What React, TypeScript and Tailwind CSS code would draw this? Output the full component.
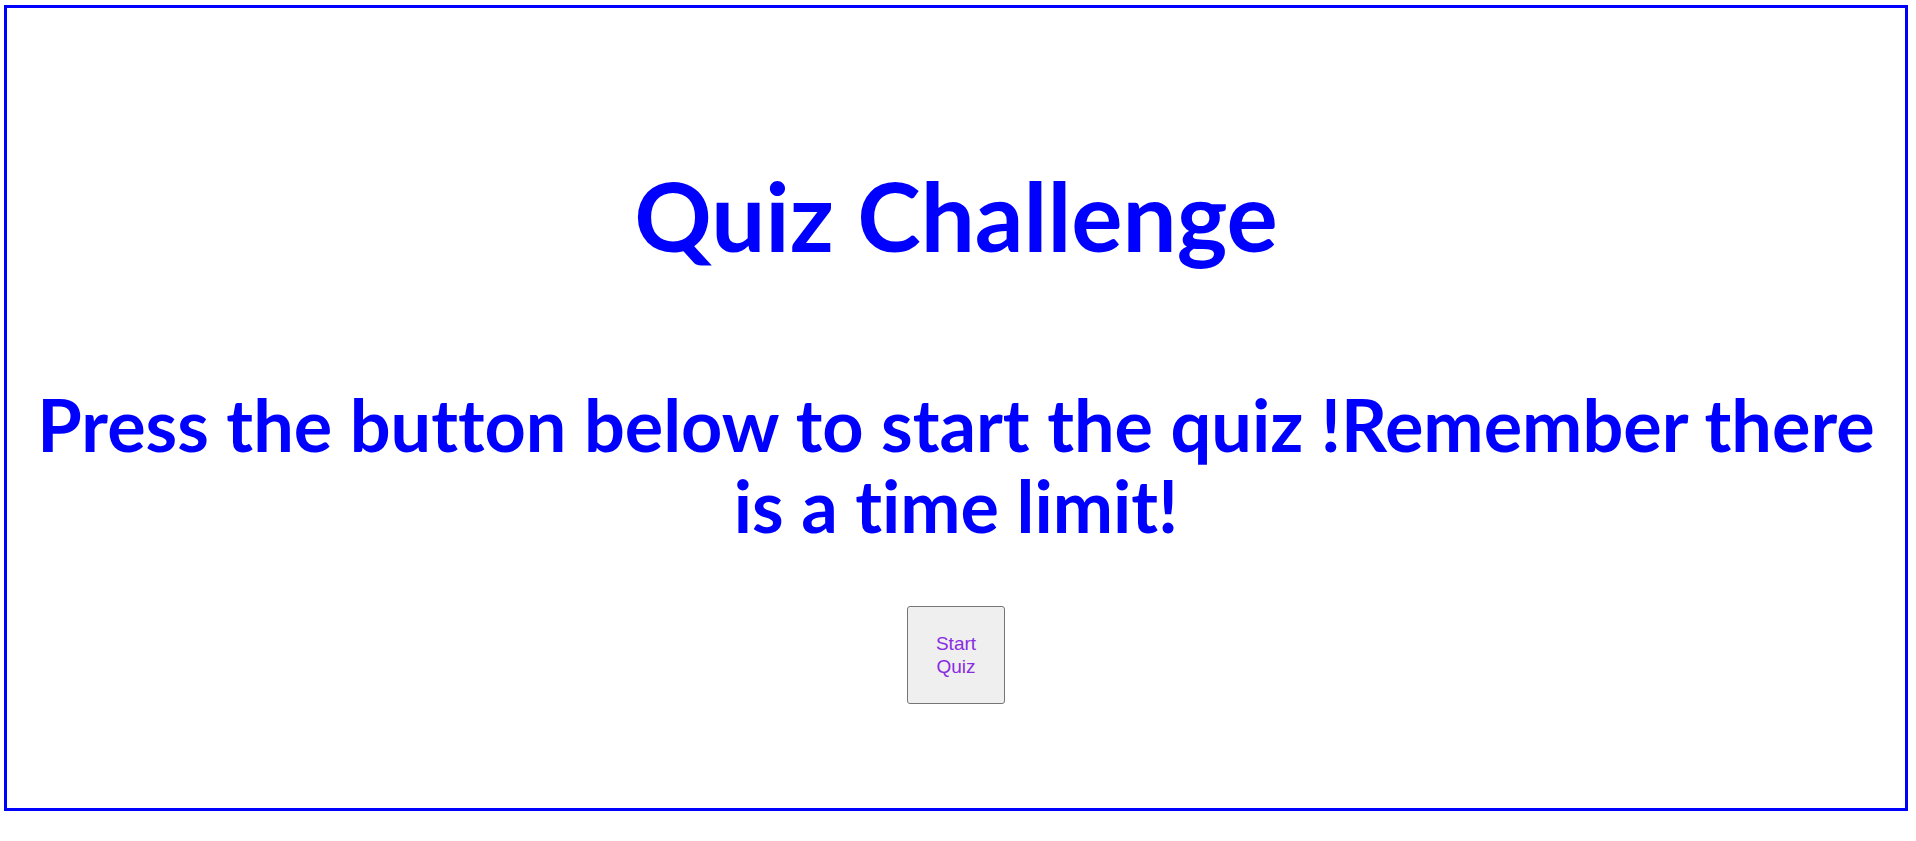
import React from "react";

export default function App() {
  return (
    <div className="bg-white w-[1916px] h-[841px] overflow-hidden pt-[5px] pl-[4px]">
      <div className="w-[1904px] h-[806px] border-[3px] border-[#0000ff] flex flex-col items-center pt-[152px] font-[Lato,'Open_Sans',sans-serif] [font-variant-ligatures:none]">
        <h1 className="text-[96px] leading-[110px] font-bold text-[#0000ff] text-center">
          Quiz Challenge
        </h1>
        <h2 className="mt-[114px] text-[72px] leading-[81px] font-bold text-[#0000ff] text-center w-[1890px]">
          Press the button below to start the quiz !Remember there
          <br />
          is a time limit!
        </h2>
        <button className="mt-[60px] w-[98px] h-[98px] bg-[#efefef] border border-[#767676] rounded-[3px] text-[#8a2be2] text-[19px] leading-[23px] flex flex-col items-center justify-center font-['Liberation_Sans',Arial,sans-serif]">
          <span>Start</span>
          <span>Quiz</span>
        </button>
      </div>
    </div>
  );
}
